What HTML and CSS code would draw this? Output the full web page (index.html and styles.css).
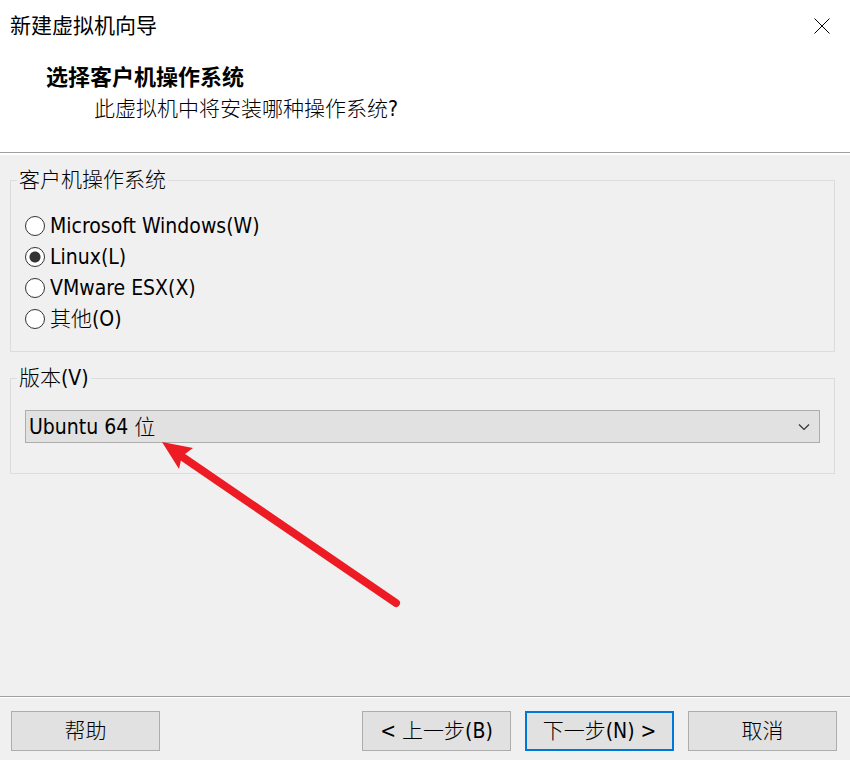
FILE: index.html
```html
<!DOCTYPE html>
<html lang="zh-CN">
<head>
<meta charset="utf-8">
<meta name="viewport" content="width=device-width, initial-scale=1">
<title>新建虚拟机向导</title>
<link rel="stylesheet" href="styles.css">
</head>
<body>
<form class="wizard">
  <header class="header">
    <div class="titlebar">
      <span class="title">新建虚拟机向导</span>
      <button class="close" type="button" aria-label="关闭">
        <svg width="16" height="16" viewBox="0 0 16 16" aria-hidden="true"><path d="M.5 .5l15 15M15.500 .5l-15 15" stroke="#000" fill="none"/></svg>
      </button>
    </div>
    <h1 class="heading">选择客户机操作系统</h1>
    <p class="subheading">此虚拟机中将安装哪种操作系统?</p>
  </header>

  <main class="content">
    <fieldset class="group">
      <legend>客户机操作系统</legend>
      <div class="options">
        <label class="option"><input type="radio" name="os"><span>Microsoft Windows(W)</span></label>
        <label class="option"><input type="radio" name="os" checked><span>Linux(L)</span></label>
        <label class="option"><input type="radio" name="os"><span>VMware ESX(X)</span></label>
        <label class="option"><input type="radio" name="os"><span>其他(O)</span></label>
      </div>
    </fieldset>

    <fieldset class="group">
      <legend><label for="version">版本(V)</label></legend>
      <div class="picker">
        <select id="version"><option>Ubuntu 64 位</option></select>
        <svg class="chevron" width="12" height="8" viewBox="0 0 12 8" aria-hidden="true"><path d="M1 1.500l5 5l5-5" stroke="#333" stroke-width="1.200" fill="none"/></svg>
        <svg class="arrow" width="240" height="168" viewBox="0 0 240 168" aria-hidden="true"><path d="M22 16L234 161" stroke="#ed1c24" stroke-width="8" stroke-linecap="round"/><path d="M0 0L31 6L23 12L19 18L17 27Z" fill="#ed1c24"/></svg>
      </div>
    </fieldset>
  </main>

  <footer class="footer">
    <button class="btn help" type="button">帮助</button>
    <button class="btn" type="button">&lt; 上一步(B)</button>
    <button class="btn primary" type="button">下一步(N) &gt;</button>
    <button class="btn" type="button">取消</button>
  </footer>
</form>
</body>
</html>
```

FILE: styles.css
```css
* {
  box-sizing: border-box;
}

body {
  margin: 0;
  background: #f0f0f0;
  color: #000;
}

.wizard,
.wizard button,
.wizard select {
  font-family: "DejaVu Sans Condensed", "Noto Sans CJK SC", sans-serif;
  font-size: 21px;
  font-weight: 300;
  line-height: 28px;
  color: #000;
}

.wizard {
  display: flex;
  flex-direction: column;
  min-height: 100vh;
}

.header {
  padding: 8px 20px 29px 10px;
  background: #fff;
  border-bottom: 1px solid #a0a0a0;
}

.titlebar {
  display: flex;
  align-items: center;
  justify-content: space-between;
  height: 36px;
}

.title {
  font-weight: 400;
}

.close {
  display: flex;
  padding: 0;
  border: 0;
  background: none;
}

.heading {
  margin: 20px 0 0 36px;
  font-size: 22px;
  font-weight: 700;
  line-height: 28px;
}

.subheading {
  margin: 3px 0 0 84px;
}

.content {
  flex: 1;
  padding: 11px 15px 0 10px;
  border-top: 2px solid #fff;
}

.group {
  min-width: 0;
  margin: 0 0 12px;
  padding: 0 14px;
  border: 1px solid #dcdcdc;
}

.group legend {
  margin-left: -8px;
  padding: 0 2px;
}

.options {
  padding: 16px 0 17px;
}

.option {
  display: flex;
  align-items: center;
  gap: 5px;
  width: fit-content;
  height: 31px;
}

.option input {
  appearance: none;
  width: 20px;
  height: 20px;
  margin: 0;
  border: 1px solid #333;
  border-radius: 50%;
  background: #fff;
}

.option input:checked {
  background: radial-gradient(circle, #333 5px, #fff 6px);
}

.picker {
  position: relative;
  padding: 18px 0 30px;
}

.picker select {
  appearance: none;
  display: block;
  width: 100%;
  height: 33px;
  padding: 0 32px 0 3px;
  border: 1px solid #adadad;
  border-radius: 0;
  background: #e1e1e1;
}

.chevron {
  position: absolute;
  top: 31px;
  right: 10px;
  pointer-events: none;
}

.arrow {
  position: absolute;
  top: 50px;
  left: 137px;
  pointer-events: none;
}

.footer {
  display: flex;
  gap: 14px;
  padding: 14px 13px 9px 11px;
  border-top: 1px solid #a0a0a0;
  box-shadow: inset 0 1px #fff;
}

.btn {
  width: 149px;
  height: 40px;
  padding: 0;
  border: 1px solid #adadad;
  background: #e1e1e1;
}

.btn.primary {
  border: 2px solid #0078d7;
}

.help {
  margin-right: auto;
}
```
